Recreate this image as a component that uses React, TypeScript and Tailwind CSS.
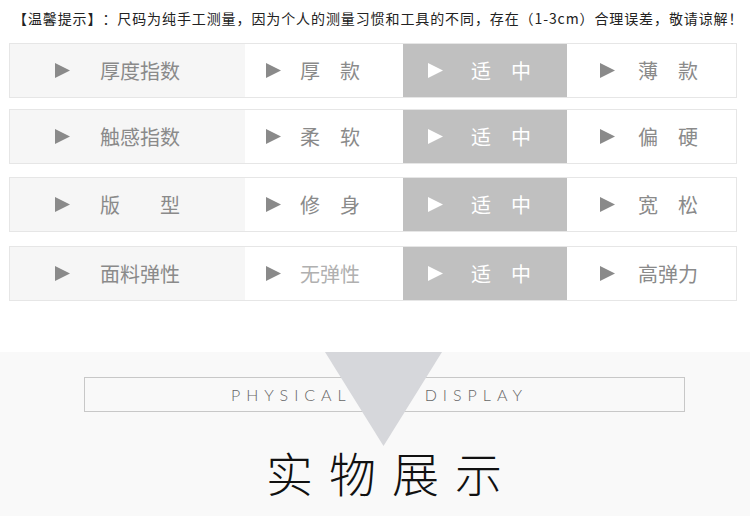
import React from "react";

const cjk = { fontFamily: '"Noto Sans CJK SC", "Noto Sans", sans-serif' };

const Arrow = ({ white }: { white?: boolean }) => (
  <svg width="15" height="15" viewBox="0 0 15 15" className="shrink-0">
    <polygon points="0,0 15,7.5 0,15" fill={white ? "#ffffff" : "#8a8a8a"} />
  </svg>
);

type Row = { label: string; a: string; b: string; c: string; aLight?: boolean; mt: string };

const rows: Row[] = [
  { label: "厚度指数", a: "厚　款", b: "适　中", c: "薄　款", mt: "mt-[11px]" },
  { label: "触感指数", a: "柔　软", b: "适　中", c: "偏　硬", mt: "mt-[11px]" },
  { label: "版　　型", a: "修　身", b: "适　中", c: "宽　松", mt: "mt-[13px]" },
  { label: "面料弹性", a: "无弹性", b: "适　中", c: "高弹力", aLight: true, mt: "mt-[14px]" },
];

export default function App() {
  return (
    <div className="w-[750px] h-[517px] bg-white overflow-hidden" style={cjk}>
      <div className="pt-[10px] pl-[13px] text-[14px] leading-[16px] tracking-[0.9px] text-[#222] whitespace-nowrap [text-spacing-trim:space-all]">
        【温馨提示】：尺码为纯手工测量，因为个人的测量习惯和工具的不同，存在（1-3cm）合理误差，敬请谅解！
      </div>
      <div className="pt-[1px]">
        {rows.map((r, i) => (
          <div
            key={i}
            className={`${i === 0 ? "mt-[16px]" : r.mt} ml-[9px] w-[728px] h-[55px] border border-[#e6e6e6] flex text-[20px] leading-none`}
          >
            <div className="w-[235px] bg-[#f6f6f6] flex items-center pl-[45px] gap-[30px] text-[#8a8a8a]">
              <Arrow />
              <span>{r.label}</span>
            </div>
            <div className="w-[158px] bg-white flex items-center pl-[21px] gap-[19px]">
              <Arrow />
              <span className={r.aLight ? "text-[#b0b0b0]" : "text-[#8a8a8a]"}>{r.a}</span>
            </div>
            <div className="w-[164px] bg-[#c0c0c0] flex items-center pl-[25px] gap-[28px] text-white">
              <Arrow white />
              <span>{r.b}</span>
            </div>
            <div className="flex-1 bg-white flex items-center pl-[33px] gap-[23px] text-[#8a8a8a]">
              <Arrow />
              <span>{r.c}</span>
            </div>
          </div>
        ))}
      </div>
      <div className="mt-[51px] h-[164px] bg-[#f9f9f9] relative">
        <div className="pt-[25px] pl-[84px]">
          <div className="w-[601px] h-[35px] border border-[#c8c8c8] flex items-center pl-[146px] text-[16px] tracking-[6px] text-[#666]" style={{ fontFamily: 'Lato, "Liberation Sans", sans-serif', fontWeight: 300 }}>
            <span>PHYSICAL</span>
            <span className="ml-[73px]">DISPLAY</span>
          </div>
        </div>
        <svg className="absolute left-[325px] top-0" width="117" height="94" viewBox="0 0 117 94">
          <polygon points="0,0 117,0 58.5,94" fill="#d6d7db" />
        </svg>
        <div className="mt-[36px] pl-[266px] text-[47px] leading-none tracking-[16px] text-[#111] whitespace-nowrap" style={{ fontWeight: 300 }}>
          实物展示
        </div>
      </div>
    </div>
  );
}
